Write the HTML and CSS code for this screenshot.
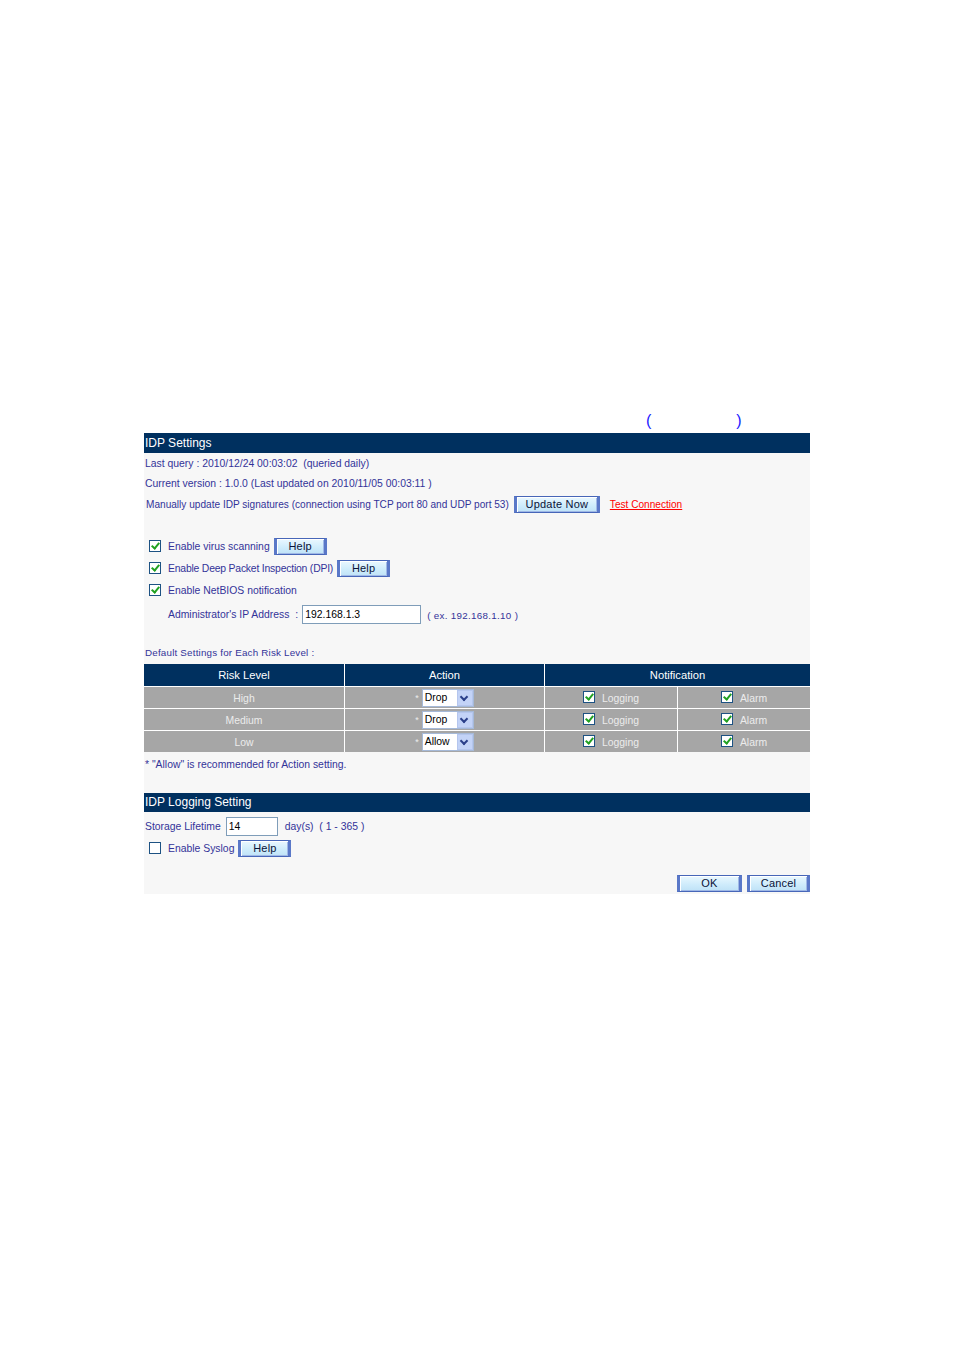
FILE: index.html
```html
<!DOCTYPE html>
<html lang="en">
<head>
    <meta charset="UTF-8">
    <title>IDP Settings</title>
    <link rel="stylesheet" href="styles.css">
</head>
<body>
    <div class="page">
        <div class="paren-line"><span>(</span><span class="paren-close">)</span></div>
        <div class="panel">
            <div class="bar">IDP Settings</div>
            <div class="line">Last query : 2010/12/24 00:03:02 &nbsp;(queried daily)</div>
            <div class="line">Current version : 1.0.0 (Last updated on 2010/11/05 00:03:11 )</div>
            <div class="line line-update">
                <span>Manually update IDP signatures (connection using TCP port 80 and UDP port 53)</span>
                <button class="btn btn-update">Update Now</button>
                <a class="test-link">Test Connection</a>
            </div>

            <div class="checks">
                <div class="check-row">
                    <span class="chk on"></span><span class="lbl">Enable virus scanning</span>
                    <button class="btn btn-help">Help</button>
                </div>
                <div class="check-row">
                    <span class="chk on"></span><span class="lbl lbl-tight">Enable Deep Packet Inspection (DPI)</span>
                    <button class="btn btn-help">Help</button>
                </div>
                <div class="check-row">
                    <span class="chk on"></span><span class="lbl">Enable NetBIOS notification</span>
                </div>
                <div class="ip-row">
                    <span class="ip-label">Administrator's IP Address</span>
                    <span class="colon">:</span>
                    <span class="field field-ip">192.168.1.3</span>
                    <span class="hint">( ex. 192.168.1.10 )</span>
                </div>
            </div>

            <div class="line caption">Default Settings for Each Risk Level :</div>
            <table class="risk">
                <tr class="head">
                    <th class="c-level">Risk Level</th>
                    <th class="c-action">Action</th>
                    <th colspan="2">Notification</th>
                </tr>
                <tr>
                    <td>High</td>
                    <td><span class="star">*</span><span class="sel"><span class="sel-val">Drop</span><span class="sel-arrow"></span></span></td>
                    <td class="c-log"><span class="chk on"></span>Logging</td>
                    <td class="c-alarm"><span class="chk on"></span>Alarm</td>
                </tr>
                <tr>
                    <td>Medium</td>
                    <td><span class="star">*</span><span class="sel"><span class="sel-val">Drop</span><span class="sel-arrow"></span></span></td>
                    <td class="c-log"><span class="chk on"></span>Logging</td>
                    <td class="c-alarm"><span class="chk on"></span>Alarm</td>
                </tr>
                <tr>
                    <td>Low</td>
                    <td><span class="star">*</span><span class="sel"><span class="sel-val">Allow</span><span class="sel-arrow"></span></span></td>
                    <td class="c-log"><span class="chk on"></span>Logging</td>
                    <td class="c-alarm"><span class="chk on"></span>Alarm</td>
                </tr>
            </table>
            <div class="line note">* "Allow" is recommended for Action setting.</div>

            <div class="bar bar-log">IDP Logging Setting</div>
            <div class="life-row">
                <span>Storage Lifetime</span>
                <span class="field field-life">14</span>
                <span class="days">day(s) &nbsp;( 1 - 365 )</span>
            </div>
            <div class="check-row syslog">
                <span class="chk"></span><span class="lbl">Enable Syslog</span>
                <button class="btn btn-help">Help</button>
            </div>
            <div class="actions">
                <button class="btn btn-ok">OK</button>
                <button class="btn btn-cancel">Cancel</button>
            </div>
        </div>
    </div>
</body>
</html>
```

FILE: styles.css
```css
body {
    margin: 0;
    padding: 0;
    background-color: #fff;
    font-family: "Liberation Sans", Arial, sans-serif;
}
.page {
    padding-top: 410px;
    margin-left: 144px;
    width: 666px;
}
.paren-line {
    height: 23px;
    padding-left: 502px;
    color: #1a1aff;
    font-size: 16px;
    line-height: 21px;
}
.paren-close {
    margin-left: 85px;
}
.panel {
    background-color: #f7f7f7;
    color: #333399;
    font-size: 10.4px;
}
.bar {
    background-color: #00305f;
    color: #fff;
    font-size: 12px;
    height: 20px;
    line-height: 20px;
    padding-left: 1px;
}
.bar-log {
    height: 19px;
    line-height: 19px;
    margin-top: 18px;
}
.line {
    height: 20px;
    line-height: 22px;
    padding-left: 1px;
    white-space: nowrap;
}
.line-update {
    height: 21px;
    display: flex;
    align-items: center;
    padding-left: 2px;
    padding-top: 1px;
    font-size: 10.1px;
}
.test-link {
    color: #ff0000;
    text-decoration: underline;
    margin-left: 10px;
}
.btn {
    font-family: "Liberation Sans", Arial, sans-serif;
    font-size: 11px;
    color: #0a1238;
    height: 17px;
    padding: 0;
    background: linear-gradient(#eaf8ff, #cdebfb 60%, #bfe2f7);
    border: 1px solid #4766b8;
    border-left: 3px solid #5a78c8;
    border-right: 3px solid #5a78c8;
    box-shadow: inset 1px 1px 0 #fff, inset -1px -1px 0 #9fb8e6;
    cursor: pointer;
    line-height: 13px;
    letter-spacing: 0.2px;
}
.btn-update {
    width: 86px;
    margin-left: 5px;
}
.btn-help {
    width: 53px;
    margin-left: 4px;
}
.checks {
    padding-top: 20px;
    padding-left: 5px;
}
.check-row {
    height: 22px;
    display: flex;
    align-items: center;
    white-space: nowrap;
}
.chk {
    display: inline-block;
    width: 10px;
    height: 10px;
    border: 1px solid #1d5283;
    background-color: #fff;
    position: relative;
    vertical-align: middle;
}
.chk.on::after {
    content: "";
    position: absolute;
    left: 3px;
    top: 0px;
    width: 3px;
    height: 6px;
    border: solid #21a121;
    border-width: 0 2px 2px 0;
    transform: rotate(40deg);
}
.lbl {
    margin-left: 7px;
}
.lbl-tight {
    letter-spacing: -0.2px;
}
.ip-row {
    height: 24px;
    display: flex;
    align-items: center;
    padding-left: 19px;
    margin-top: 1px;
    white-space: nowrap;
}
.colon {
    margin-left: 6px;
    margin-right: 4px;
}
.field {
    display: inline-block;
    box-sizing: border-box;
    height: 19px;
    line-height: 17px;
    border: 1px solid #7f9db9;
    background-color: #fff;
    color: #000;
    padding-left: 2px;
}
.field-ip {
    width: 119px;
}
.hint {
    margin-left: 6px;
    margin-top: 3px;
    font-size: 9.8px;
    letter-spacing: 0.3px;
}
.caption {
    margin-top: 19px;
    height: 19px;
    line-height: 15px;
    font-size: 9.8px;
    letter-spacing: 0.2px;
}
.risk {
    width: 666px;
    border-collapse: collapse;
    border-spacing: 0;
}
.risk th {
    background-color: #00305f;
    color: #fff;
    font-weight: normal;
    font-size: 11.2px;
    height: 22px;
    padding: 0;
    border-right: 1px solid #fff;
    border-bottom: 1px solid #fff;
}
.risk td {
    background-color: #a6a6a6;
    color: #ececec;
    text-align: center;
    height: 20px;
    padding: 1px 0 0;
    border-right: 1px solid #fff;
    border-bottom: 1px solid #fff;
    white-space: nowrap;
}
.risk tr > :last-child {
    border-right: none;
}
.risk tr:last-child td {
    border-bottom: none;
}
.c-level {
    width: 200px;
}
.c-action {
    width: 199px;
}
.c-log {
    width: 132px;
}
.star {
    font-size: 9px;
    margin-right: 3px;
    vertical-align: middle;
}
.sel {
    display: inline-flex;
    box-sizing: border-box;
    width: 52px;
    height: 18px;
    border: 1px solid #a5b9d8;
    background-color: #fff;
    vertical-align: middle;
    text-align: left;
}
.sel-val {
    flex: 1;
    color: #000;
    line-height: 16px;
    padding-left: 2px;
}
.sel-arrow {
    width: 14px;
    background: #c3d3f7;
    border: 1px solid #b5c6ee;
    position: relative;
}
.sel-arrow::after {
    content: "";
    position: absolute;
    left: 3px;
    top: 3px;
    width: 4px;
    height: 4px;
    border: solid #2b3f8a;
    border-width: 0 2px 2px 0;
    transform: rotate(45deg);
}
.c-log .chk, .c-alarm .chk {
    margin-right: 7px;
    margin-top: -3px;
}
.note {
    height: 22px;
    line-height: 24px;
    margin-top: 1px;
}
.life-row {
    height: 22px;
    margin-top: 3px;
    display: flex;
    align-items: center;
    padding-left: 1px;
    white-space: nowrap;
}
.field-life {
    width: 52px;
    margin-left: 5px;
}
.days {
    margin-left: 7px;
}
.syslog {
    padding-left: 5px;
}
.actions {
    display: flex;
    justify-content: flex-end;
    gap: 5px;
    padding-top: 16px;
    padding-bottom: 2px;
}
.btn-ok {
    width: 65px;
}
.btn-cancel {
    width: 63px;
}
```
